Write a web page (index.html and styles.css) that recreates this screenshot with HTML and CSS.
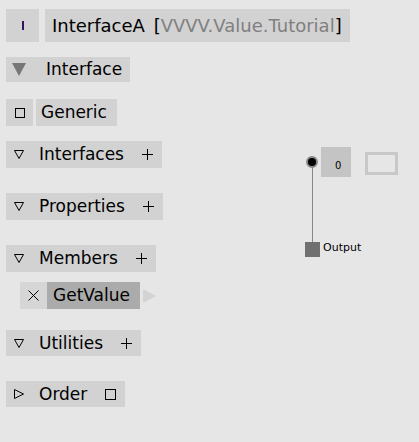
FILE: index.html
```html
<!DOCTYPE html>
<html>
<head>
<meta charset="utf-8">
<link rel="stylesheet" href="styles.css">
</head>
<body>
<div class="page">
  <div class="row header">
    <div class="box icon-i"><span class="ibar"></span></div>
    <div class="box title">InterfaceA <span class="br open">[</span><span class="ns">VVVV.Value.Tutorial</span><span class="br close">]</span></div>
  </div>

  <div class="row r-interface">
    <div class="box interface">
      <svg class="big-tri" width="14" height="13" viewBox="0 0 14 13"><polygon points="0,0 14,0 7,13" fill="#777"/></svg>
      <span class="lbl">Interface</span>
    </div>
  </div>

  <div class="row r-generic">
    <div class="box small-icon"><svg width="10" height="10" viewBox="0 0 10 10"><rect x="0.5" y="0.5" width="9" height="9" fill="none" stroke="#000"/></svg></div>
    <div class="box generic"><span class="lbl">Generic</span></div>
  </div>

  <div class="row r-interfaces">
    <div class="box section">
      <svg class="tri" width="10" height="9" viewBox="0 0 10 9"><polygon points="0.5,0.5 9.5,0.5 5,8.5" fill="none" stroke="#000"/></svg>
      <span class="lbl">Interfaces</span>
      <svg class="plus" width="11" height="11" viewBox="0 0 11 11"><path d="M0 5.5H11M5.5 0V11" stroke="#000"/></svg>
    </div>
  </div>

  <div class="row r-properties">
    <div class="box section">
      <svg class="tri" width="10" height="9" viewBox="0 0 10 9"><polygon points="0.5,0.5 9.5,0.5 5,8.5" fill="none" stroke="#000"/></svg>
      <span class="lbl">Properties</span>
      <svg class="plus" width="11" height="11" viewBox="0 0 11 11"><path d="M0 5.5H11M5.5 0V11" stroke="#000"/></svg>
    </div>
  </div>

  <div class="row r-members">
    <div class="box section">
      <svg class="tri" width="10" height="9" viewBox="0 0 10 9"><polygon points="0.5,0.5 9.5,0.5 5,8.5" fill="none" stroke="#000"/></svg>
      <span class="lbl">Members</span>
      <svg class="plus" width="11" height="11" viewBox="0 0 11 11"><path d="M0 5.5H11M5.5 0V11" stroke="#000"/></svg>
    </div>
  </div>

  <div class="row r-getvalue">
    <div class="box x-icon"><svg width="11" height="11" viewBox="0 0 11 11"><path d="M0.5 0.5L10.5 10.5M10.5 0.5L0.5 10.5" stroke="#000"/></svg></div>
    <div class="box member"><span class="lbl">GetValue</span></div>
    <svg class="play" width="13" height="14" viewBox="0 0 13 14"><polygon points="0,0 13,7 0,14" fill="#d3d3d3"/></svg>
  </div>

  <div class="row r-utilities">
    <div class="box section">
      <svg class="tri" width="10" height="9" viewBox="0 0 10 9"><polygon points="0.5,0.5 9.5,0.5 5,8.5" fill="none" stroke="#000"/></svg>
      <span class="lbl">Utilities</span>
      <svg class="plus" width="11" height="11" viewBox="0 0 11 11"><path d="M0 5.5H11M5.5 0V11" stroke="#000"/></svg>
    </div>
  </div>

  <div class="row r-order">
    <div class="box section order">
      <svg class="tri" width="10" height="10" viewBox="0 0 10 10"><polygon points="0.5,0.5 9.5,5 0.5,9.5" fill="none" stroke="#000"/></svg>
      <span class="lbl">Order</span>
      <svg class="sq" width="11" height="11" viewBox="0 0 11 11"><rect x="0.5" y="0.5" width="10" height="10" fill="none" stroke="#000"/></svg>
    </div>
  </div>
</div>

<div class="canvas">
  <div class="pin"></div>
  <div class="wire"></div>
  <div class="outpin"></div>
  <div class="outlabel">Output</div>
  <div class="valbox">0</div>
  <div class="emptybox"></div>
</div>
</body>
</html>
```

FILE: styles.css
```css
html, body {
  margin: 0;
  padding: 0;
  background: #e6e6e6;
  width: 419px;
  height: 442px;
  overflow: hidden;
  font-family: "DejaVu Sans", sans-serif;
  color: #000;
}

.page {
  display: flex;
  flex-direction: column;
  align-items: flex-start;
  padding: 9px 0 0 6px;
}

.row {
  display: flex;
  align-items: center;
}

.box {
  background: #d2d2d2;
  display: flex;
  align-items: center;
  box-sizing: border-box;
}

.lbl {
  font-size: 17px;
  line-height: 1;
}

/* header */
.header { gap: 6px; height: 33px; }
.icon-i { width: 33px; height: 33px; justify-content: center; }
.ibar { display: block; width: 2px; height: 9px; background: #3a1060; }
.title {
  height: 33px;
  width: 305px;
  padding-left: 7px;
  font-size: 18px;
  white-space: pre;
}
.title .open { margin-left: 3px; }
.title .ns { color: #808080; }

/* Interface */
.r-interface { margin-top: 15px; }
.interface { height: 25px; width: 124px; padding-left: 6px; }
.big-tri { margin-right: 20px; }

/* Generic */
.r-generic { margin-top: 17px; gap: 3px; }
.small-icon { width: 27px; height: 27px; justify-content: center; }
.generic { height: 27px; width: 81px; padding-left: 5px; }

/* sections */
.section { height: 27px; padding: 0 9px 0 8px; }
.section .tri { margin-right: 15px; }
.section .plus { margin-left: 18px; }
.r-interfaces { margin-top: 15px; }
.r-properties { margin-top: 25px; }
.r-members { margin-top: 25px; }
.r-utilities { margin-top: 21px; }
.r-order { margin-top: 25px; }
.order .sq { margin-left: 18px; }
.r-utilities .section, .r-order .section { height: 26px; }

/* GetValue */
.r-getvalue { margin-top: 10px; margin-left: 14px; }
.x-icon { width: 27px; height: 27px; justify-content: center; background: #d6d6d6; }
.member { height: 27px; width: 93px; background: #ababab; padding-left: 6px; }
.play { margin-left: 3px; }

/* canvas */
.canvas {
  position: absolute;
  left: 0;
  top: 0;
  width: 419px;
  height: 442px;
  pointer-events: none;
}
.pin {
  position: absolute;
  left: 306px;
  top: 156px;
  width: 8px;
  height: 8px;
  border-radius: 50%;
  background: #000;
  border: 2px solid #888;
}
.wire {
  position: absolute;
  left: 312px;
  top: 166px;
  width: 1px;
  height: 76px;
  background: #888;
}
.outpin {
  position: absolute;
  left: 305px;
  top: 242px;
  width: 15px;
  height: 15px;
  background: #707070;
}
.outlabel {
  position: absolute;
  left: 323px;
  top: 241px;
  font-size: 11px;
  font-family: "DejaVu Sans", sans-serif;
}
.valbox {
  position: absolute;
  left: 321px;
  top: 147px;
  width: 30px;
  height: 30px;
  background: #c4c4c4;
  font-size: 10px;
  box-sizing: border-box;
  padding: 14px 0 0 14px;
  line-height: 1;
}
.emptybox {
  position: absolute;
  left: 365px;
  top: 152px;
  width: 33px;
  height: 23px;
  box-sizing: border-box;
  border: 3px solid #c8c8c8;
}
```
